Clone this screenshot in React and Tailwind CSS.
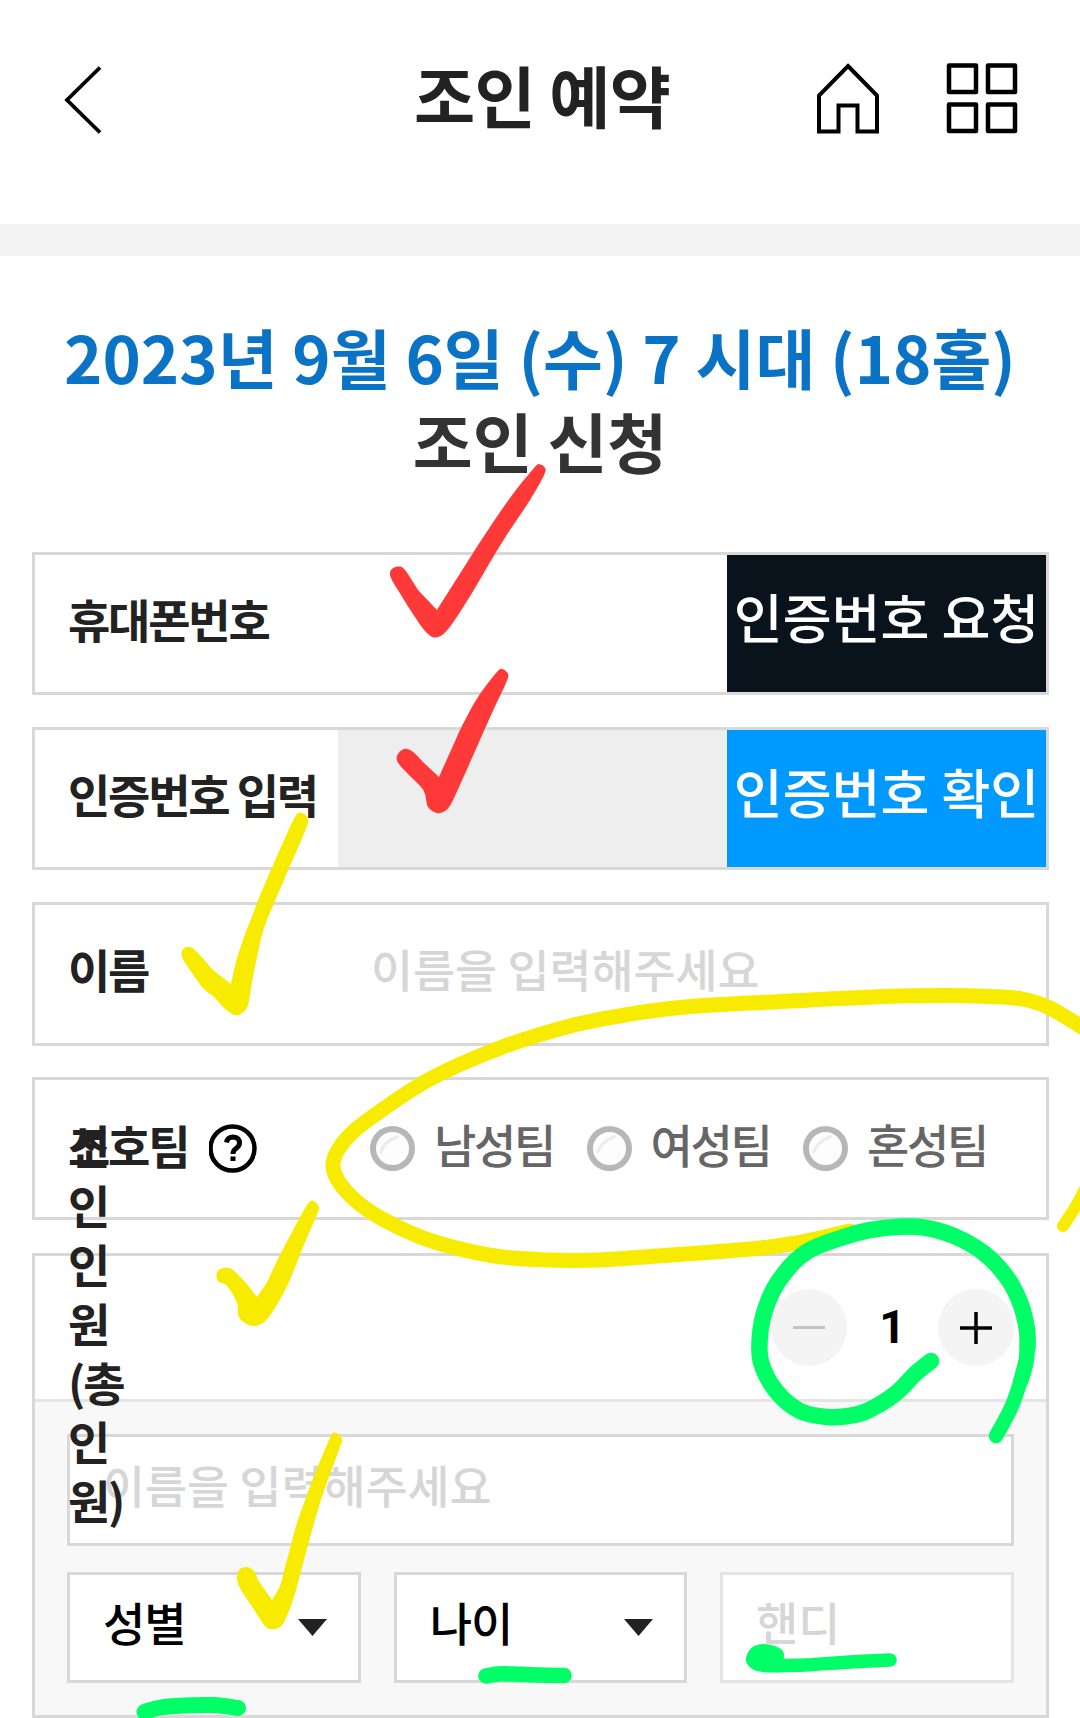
const BOX = "flex border-[3px] border-[#d8d8d8] bg-white";
const LABEL = "text-[46px] leading-[59px] font-bold tracking-[-2.200px] text-[#222]";
const HINT = "text-[45.700px] leading-[59px] font-medium text-[#d6d6d6]";

// Catmull-Rom spline through a flat list of x,y pairs.
function curve(flat) {
  const p = [];
  for (let i = 0; i < flat.length; i += 2) p.push([flat[i], flat[i + 1]]);
  const n = p.length;
  const at = (i) => p[Math.max(0, Math.min(n - 1, i))];
  let d = `M${p[0][0]} ${p[0][1]}`;
  for (let i = 0; i < n - 1; i++) {
    const [a, b, c, e] = [at(i - 1), at(i), at(i + 1), at(i + 2)];
    d += ` C${b[0] + (c[0] - a[0]) / 6} ${b[1] + (c[1] - a[1]) / 6} ${c[0] - (e[0] - b[0]) / 6} ${c[1] - (e[1] - b[1]) / 6} ${c[0]} ${c[1]}`;
  }
  return d;
}

// Outlines of the five check marks; each starts and ends at its inner corner.
const CHECKS = [
  { fill: "#ff3838", pts: [437, 610, 461, 572, 484, 536, 510, 498, 534, 468, 540, 464.5, 545, 468, 544, 475, 530, 500, 501, 544, 472, 593, 449, 628, 436, 637.5, 425, 631, 411, 611, 401, 595, 391, 578, 391, 570, 398, 566.5, 405, 570, 418, 590] },
  { fill: "#ff3838", pts: [439, 777, 452, 748, 463, 724, 478, 697, 496, 673, 502, 669, 508, 674, 506, 683, 492, 713, 468, 767, 459, 787, 451, 804, 445, 811, 437, 813, 428, 807, 425, 794, 421, 787, 411, 777, 399, 764, 397, 756, 404, 749, 413, 752, 424, 763] },
  { fill: "#f7ec00", pts: [231, 984, 236, 962, 244, 937, 251, 919, 259, 898, 267, 879, 281, 847, 295, 817, 302, 813, 308, 819, 305, 831, 284, 880, 275, 901, 264, 928, 257, 957, 252, 982, 248, 1005, 242, 1013, 235, 1015, 225, 1009, 215, 998, 203, 988, 192, 973, 182, 957, 183, 949, 189, 947, 196, 951, 213, 970] },
  { fill: "#f7ec00", pts: [257, 1297, 267, 1282, 276, 1263, 291, 1234, 307, 1205, 313, 1201, 319, 1207, 316, 1217, 306, 1240, 288, 1284, 273, 1311, 263, 1323, 252, 1326, 242, 1321, 238, 1314, 237, 1303, 227, 1286, 218, 1281, 217, 1272, 224, 1268, 233, 1270, 246, 1283] },
  { fill: "#f7ec00", pts: [272, 1600, 280, 1586, 285, 1567, 291, 1545, 297, 1523, 311, 1484, 330, 1438, 336, 1433, 342, 1439, 339, 1450, 320, 1503, 304, 1560, 294, 1597, 285, 1620, 280, 1627, 273, 1629, 265, 1626, 253, 1608, 240, 1588, 237, 1577, 240, 1569, 247, 1567, 254, 1571, 258, 1580] },
];

const STROKES = [
  { color: "#f7ec00", width: 15, pts: [850, 1231, 820, 1238, 790, 1244, 760, 1248, 700, 1253, 657, 1256, 600, 1260, 548, 1260, 495, 1256, 438, 1243, 400, 1228, 365, 1208, 341, 1185, 333, 1163, 346, 1139, 372, 1117, 430, 1079, 500, 1048, 570, 1026, 625, 1015, 685, 1007, 781, 1001.5, 884, 996.5, 946, 995.5, 990, 996.5, 1022, 999, 1050, 1008, 1088, 1031] },
  { color: "#f7ec00", width: 12, pts: [1090, 1180, 1076, 1206, 1063, 1226] },
  { color: "#00ff66", width: 16.5, pts: [931, 1361, 916, 1373, 895, 1394, 867, 1411, 848, 1416, 827, 1417, 800, 1411, 776, 1391, 761, 1362, 760, 1335, 766, 1307, 780, 1279, 808, 1251, 857, 1233, 885, 1228, 920, 1227, 954, 1236, 985, 1254, 1008, 1279, 1021, 1305, 1027, 1330, 1027.5, 1348] },
  { color: "#00ff66", width: 15.5, pts: [1027.5, 1345, 1026, 1362, 1021, 1380] },
  { color: "#00ff66", width: 14.5, pts: [1025.5, 1362, 1021, 1380, 1011, 1408, 996, 1436] },
  { color: "#00ff66", width: 16, pts: [144.5, 1712, 158, 1708, 175, 1706, 213, 1705, 238, 1708] },
  { color: "#00ff66", width: 15.5, pts: [486, 1676, 498, 1674, 513, 1674, 540, 1675, 564, 1675.5] },
  { color: "#00ff66", width: 13.5, pts: [775, 1665.5, 805, 1665, 850, 1662, 890, 1660] },
];

function Header() {
  return (
    <header className="flex h-[224px] items-start pt-[60px] pl-[60px]">
      <svg className="mt-[3px] h-[74px] w-[46px]" viewBox="0 0 46 74" fill="none" stroke="#000" strokeWidth="3.800">
        <path d="M40 4.500 L7 37 L40 69.500" />
      </svg>
      <h1 className="mt-[-10px] ml-[308px] w-[259px] whitespace-nowrap text-[66.500px] leading-[88px] font-bold tracking-[-0.700px] text-[#222]">조인 예약</h1>
      <svg className="mt-[2px] ml-[142px] h-[72px] w-[66px]" viewBox="0 0 66 72" fill="none" stroke="#000" strokeWidth="4">
        <path d="M33 4 L62 33.500 V69.500 H42.500 V43.500 H23.500 V69.500 H4 V33.500 Z" />
      </svg>
      <svg className="mt-[2px] ml-[64px] h-[74px] w-[74px]" viewBox="0 0 74 74" fill="none" stroke="#000" strokeWidth="4.500" strokeLinejoin="round">
        <rect x="4" y="3.500" width="27" height="26.500" />
        <rect x="43" y="3.500" width="27" height="26.500" />
        <rect x="4" y="42.500" width="27" height="26.500" />
        <rect x="43" y="42.500" width="27" height="26.500" />
      </svg>
    </header>
  );
}

function Radio({ label }) {
  return (
    <label className="flex w-[216.500px] items-center">
      <svg className="h-[45px] w-[45px]" viewBox="0 0 45 45" fill="none">
        <circle cx="22.500" cy="22.500" r="19.500" fill="#fdfdfd" stroke="#b7b7b7" strokeWidth="6" />
        <path d="M10.500 27 Q14 15 29 10" stroke="#ececec" strokeWidth="3" />
      </svg>
      <span className="mt-[-10px] ml-[19px] text-[46px] leading-[59px] font-medium tracking-[-2.3px] text-[#666]">{label}</span>
    </label>
  );
}

function Select({ label }) {
  return (
    <div className="flex h-[111px] items-center justify-between border-[3px] border-[#d8d8d8] bg-white pr-[31px] pl-[33px]">
      <span className="mt-[-13px] text-[46px] leading-[59px] font-medium tracking-[-1px] text-black">{label}</span>
      <svg className="h-[17px] w-[29px]" viewBox="0 0 29 17">
        <path d="M0 0 H29 L14.500 17 Z" fill="#222" />
      </svg>
    </div>
  );
}

function Marks() {
  return (
    <svg className="pointer-events-none absolute top-0 left-0 z-20 h-[1718px] w-[1080px]" viewBox="0 0 1080 1718" fill="none" strokeLinecap="round" strokeLinejoin="round">
      {CHECKS.map((c, i) => (
        <path key={i} d={curve(c.pts) + "Z"} fill={c.fill} />
      ))}
      {STROKES.map((s, i) => (
        <path key={i} d={curve(s.pts)} stroke={s.color} strokeWidth={s.width} />
      ))}
      <path d="M746 1658 Q749 1644 764 1644 Q784 1646 784 1655 L783 1672 Q758 1674 751 1668 Q745 1663 746 1658 Z" fill="#00ff66" />
    </svg>
  );
}

export default function App() {
  return (
    <div className="relative h-[1718px] w-[1080px] overflow-hidden bg-white font-['Noto_Sans_CJK_KR','Noto_Sans_CJK_SC',sans-serif]">
      <Header />
      <div className="h-[32px] bg-[#f4f4f4]" />

      <section className="h-[296px] pt-[58px] text-center text-[65.100px] leading-[84px] font-bold whitespace-nowrap">
        <p className="text-[#0a73c5]">2023년 9월 6일 (수) 7 시대 (18홀)</p>
        <p className="text-[#333]">조인 신청</p>
      </section>

      <main className="mx-[32px] w-[1017px]">
        <div className={`${BOX} h-[143px] items-stretch`}>
          <span className={`${LABEL} mt-[34px] ml-[33px] flex-1`}>휴대폰번호</span>
          <button className="w-[319px] bg-[#08131c] pb-[16px] text-[53.200px] leading-[70px] font-medium whitespace-nowrap text-white">인증번호 요청</button>
        </div>

        <div className={`${BOX} mt-[32px] h-[143px] items-stretch`}>
          <span className={`${LABEL} mt-[34px] ml-[33px] w-[270px] whitespace-nowrap`}>인증번호 입력</span>
          <div className="flex-1 bg-[#eee]" />
          <button className="w-[319px] bg-[#0099ff] pb-[16px] text-[53.200px] leading-[70px] font-medium whitespace-nowrap text-white">인증번호 확인</button>
        </div>

        <div className={`${BOX} mt-[32px] h-[144px]`}>
          <span className={`${LABEL} mt-[34px] ml-[33px] w-[303px]`}>이름</span>
          <span className={`${HINT} mt-[34px]`}>이름을 입력해주세요</span>
        </div>

        <div className={`${BOX} mt-[31px] h-[143px]`}>
          <span className={`${LABEL} mt-[35px] ml-[33px] w-[141px]`}>선호팀</span>
          <svg className="mt-[44px] h-[49px] w-[49px]" viewBox="0 0 49 49" fill="none" stroke="#000">
            <circle cx="23.500" cy="24.500" r="22" strokeWidth="4.500" />
            <path d="M17.500 18.500 Q18.500 13 24 13 Q30.500 13.500 30.500 19 Q30.500 22 27 24.500 Q24 26.500 24 30" strokeWidth="5" />
            <rect x="21.500" y="32.500" width="5" height="4.500" fill="#000" stroke="none" />
          </svg>
          <div className="mt-[-1px] ml-[112px] flex items-center">
            <Radio label="남성팀" />
            <Radio label="여성팀" />
            <Radio label="혼성팀" />
          </div>
        </div>

        <div className={`${BOX} mt-[33px] h-[465px] flex-col`}>
          <div className="flex h-[143px] shrink-0 items-center">
            <span className={`${LABEL} relative z-10 mt-[-10px] ml-[33px] flex w-[56px] flex-col whitespace-nowrap`}>
              <span>조</span>
              <span>인</span>
              <span>인</span>
              <span>원</span>
              <span>(총</span>
              <span>인</span>
              <span>원)</span>
            </span>
            <div className="mr-[32px] ml-auto flex items-center">
              <div className="flex h-[77px] w-[76px] items-center justify-center rounded-full bg-[#f4f4f4]">
                <div className="h-[3px] w-[32px] bg-[#c4c4c4]" />
              </div>
              <span className="w-[91px] text-center font-[Roboto] text-[46px] leading-[59px] font-bold text-black">1</span>
              <div className="flex h-[77px] w-[76px] items-center justify-center rounded-full bg-[#f4f4f4]">
                <svg className="h-[32px] w-[32px]" viewBox="0 0 32 32" stroke="#000" strokeWidth="3.500">
                  <path d="M0 16 H32 M16 0 V32" />
                </svg>
              </div>
            </div>
          </div>
          <div className="flex-1 border-t-[3px] border-[#e4e4e4] bg-[#f8f8f8] px-[32px] pt-[32px]">
            <div className="h-[112px] border-[3px] border-[#d8d8d8] bg-white pt-[18px] pl-[33px]">
              <p className={HINT}>이름을 입력해주세요</p>
            </div>
            <div className="mt-[26px] grid grid-cols-3 gap-[33px]">
              <Select label="성별" />
              <Select label="나이" />
              <div className="flex h-[111px] items-center border-[3px] border-[#e4e4e4] bg-white pl-[33px]">
                <span className={`${HINT} mt-[-13px]`}>핸디</span>
              </div>
            </div>
          </div>
        </div>
      </main>
      <Marks />
    </div>
  );
}
